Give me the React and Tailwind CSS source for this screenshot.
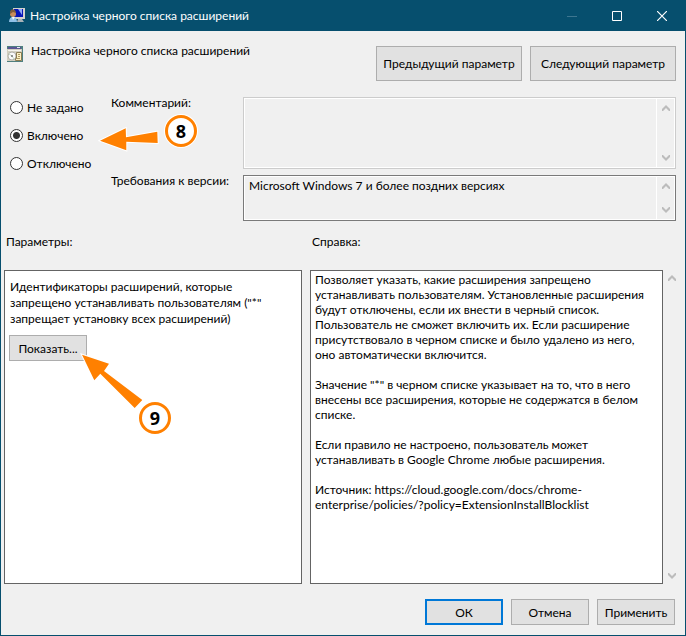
const buttonBase =
  "shrink-0 bg-[#e1e1e1] text-center whitespace-nowrap hover:bg-[#e5f1fb]";

function DialogButton({ children, className }) {
  return (
    <button type="button" className={`${buttonBase} ${className}`}>
      {children}
    </button>
  );
}

function Chevron({ direction }) {
  return (
    <svg viewBox="0 0 8 6" className="h-[6px] w-[8px]" aria-hidden="true">
      <path
        d={direction === "up" ? "M0 4 4 0 8 4V6H7L4 3 1 6H0Z" : "M0 2 4 6 8 2V0H7L4 3 1 0H0Z"}
        fill="#bcbcbc"
      />
    </svg>
  );
}

function ScrollTrack({ className }) {
  return (
    <div className={`flex w-[17px] shrink-0 flex-col items-center justify-between bg-[#f0f0f0] ${className}`}>
      <Chevron direction="up" />
      <Chevron direction="down" />
    </div>
  );
}

function PolicyIcon() {
  return (
    <svg viewBox="0 0 16 16" className="h-4 w-4 shrink-0" aria-hidden="true">
      <rect x="4" y="0" width="12" height="11" fill="#d3d2cc" />
      <rect x="5" y="1" width="9" height="8" fill="#0716b8" />
      <path d="M9 1h4v6z" fill="#8fa8f4" />
      <path d="M9 11h4l2 3H8z" fill="#a9b3b8" />
      <circle cx="4" cy="6" r="3" fill="#c98d5a" />
      <path d="M1 6c-1-6 6-6 6-1L4 4z" fill="#7d5c3c" />
      <path d="M0 14c0-7 8-7 8 0z" fill="#8fc0e6" />
      <path d="M3 9l1 3 2-3z" fill="#f4f8fc" />
    </svg>
  );
}

function SettingIcon() {
  return (
    <svg viewBox="0 0 16 16" className="h-4 w-4 shrink-0" aria-hidden="true">
      <rect width="16" height="16" fill="#4f7f80" />
      <rect x="1" y="1" width="13" height="2" fill="#5a5594" />
      <rect x="10" y="1" width="3" height="1" fill="#e8e8f4" />
      <rect x="0" y="3" width="15" height="12" fill="#d2cfc0" />
      <rect x="1" y="4" width="13" height="1" fill="#f6f5ee" />
      <circle cx="5" cy="10" r="4" fill="#fafafa" stroke="#b3b3ac" />
      <path d="M5 10 2 8M5 10l2 3" stroke="#c3dcc0" />
      <circle cx="5" cy="10" r="1" fill="#777777" />
      <path d="M9.500 6.500h5v8h-6v-2h1z" fill="#fbf0c4" stroke="#8b7c52" />
      <path d="M11 8.500h2M11 10.500h2M10 12.500h3" stroke="#b09b63" />
    </svg>
  );
}

function StateRadio({ id, label, checked }) {
  return (
    <label htmlFor={id} className="flex h-[28px] items-center gap-[4px]">
      <input
        type="radio"
        id={id}
        name="state"
        defaultChecked={checked}
        className="h-[13px] w-[13px] shrink-0 appearance-none rounded-full border border-[#333333] bg-white checked:bg-[radial-gradient(circle,#333333_0_3px,#ffffff_4px)]"
      />
      {label}
    </label>
  );
}

function StepBadge({ children, className }) {
  return (
    <span
      className={`absolute flex h-[32px] w-[32px] items-center justify-center rounded-full border-[3px] border-[#ff8000] bg-white font-['Noto_Sans',sans-serif] text-[18px] leading-none font-bold ring-1 ring-white ${className}`}
    >
      {children}
    </span>
  );
}

export default function App() {
  return (
    <div className="relative flex min-h-screen flex-col border border-t-0 border-[#064f6e] bg-[#f0f0f0] font-[Lato,'Noto_Sans',sans-serif] text-[12px] leading-[15px] text-black">
      <header className="flex h-[31px] shrink-0 items-center bg-[#064f6e] pl-[8px] text-white">
        <PolicyIcon />
        <h1 className="ml-[5px] flex-1 whitespace-nowrap">Настройка черного списка расширений</h1>
        <button type="button" aria-label="Свернуть" disabled className="flex h-full w-[45px] items-center justify-center">
          <svg viewBox="0 0 10 10" className="h-[10px] w-[10px]">
            <path d="M0 5.500h10" stroke="#3d7690" />
          </svg>
        </button>
        <button type="button" aria-label="Развернуть" className="flex h-full w-[45px] items-center justify-center">
          <svg viewBox="0 0 10 10" className="h-[10px] w-[10px]">
            <path d="M.5.5h9v9h-9z" fill="none" stroke="#ffffff" />
          </svg>
        </button>
        <button type="button" aria-label="Закрыть" className="flex h-full w-[46px] items-center justify-center">
          <svg viewBox="0 0 10 10" className="h-[10px] w-[10px]">
            <path d="M0 0 10 10M10 0 0 10" stroke="#ffffff" strokeWidth="1.2" />
          </svg>
        </button>
      </header>

      <main className="flex flex-1 flex-col">
        <section className="flex items-start pt-[15px] pr-[9px] pl-[6px]">
          <SettingIcon />
          <h2 className="-mt-[3px] ml-[8px] flex-1 whitespace-nowrap">Настройка черного списка расширений</h2>
          <div className="flex gap-[8px]">
            <DialogButton className="h-[35px] w-[146px] border border-[#adadad]">Предыдущий параметр</DialogButton>
            <DialogButton className="h-[35px] w-[146px] border border-[#adadad]">Следующий параметр</DialogButton>
          </div>
        </section>

        <form className="flex pt-[16px] pr-[9px] pl-[9px]">
          <fieldset className="-mt-[4px] w-[101px] shrink-0">
            <StateRadio id="state-unset" label="Не задано" />
            <StateRadio id="state-on" label="Включено" checked />
            <StateRadio id="state-off" label="Отключено" />
          </fieldset>
          <div className="grid flex-1 grid-cols-[132px_1fr] gap-y-[6px]">
            <label htmlFor="comment" className="-mt-[2px]">Комментарий:</label>
            <div className="flex h-[72px] gap-px border border-[#cccccc] bg-white p-px">
              <textarea id="comment" disabled className="min-w-0 flex-1 resize-none bg-[#f0f0f0] px-[4px]" />
              <ScrollTrack className="py-[6px]" />
            </div>
            <label htmlFor="supported" className="-mt-[2px]">Требования к версии:</label>
            <div className="flex h-[46px] gap-px border border-[#7a7a7a] bg-white p-px">
              <textarea
                id="supported"
                readOnly
                defaultValue="Microsoft Windows 7 и более поздних версиях"
                className="min-w-0 flex-1 resize-none overflow-hidden bg-[#f0f0f0] px-[4px] pt-px"
              />
              <ScrollTrack className="py-[6px]" />
            </div>
          </div>
        </form>

        <section className="flex flex-1 gap-[8px] pt-[13px] pr-[5px] pl-[3px]">
          <div className="flex w-[298px] shrink-0 flex-col">
            <h3 className="pl-[2px]">Параметры:</h3>
            <div className="mt-[21px] flex-1 border border-[#646464] bg-white px-[4px] pt-[8px]">
              <p className="px-px leading-[16px] whitespace-nowrap">
                Идентификаторы расширений, которые
                <br />
                запрещено устанавливать пользователям ("*"
                <br />
                запрещает установку всех расширений)
              </p>
              <DialogButton className="mt-[8px] h-[26px] w-[78px] border border-[#adadad]">Показать...</DialogButton>
            </div>
          </div>
          <div className="flex min-w-0 flex-1 flex-col">
            <h3 className="pl-[2px]">Справка:</h3>
            <div className="mt-[21px] flex flex-1">
              <div className="min-w-0 flex-1 border border-[#646464] bg-white px-[4px] pt-px whitespace-nowrap">
                <p>
                  Позволяет указать, какие расширения запрещено
                  <br />
                  устанавливать пользователям. Установленные расширения
                  <br />
                  будут отключены, если их внести в черный список.
                  <br />
                  Пользователь не сможет включить их. Если расширение
                  <br />
                  присутствовало в черном списке и было удалено из него,
                  <br />
                  оно автоматически включится.
                </p>
                <p className="mt-[15px]">
                  Значение "*" в черном списке указывает на то, что в него
                  <br />
                  внесены все расширения, которые не содержатся в белом
                  <br />
                  списке.
                </p>
                <p className="mt-[15px]">
                  Если правило не настроено, пользователь может
                  <br />
                  устанавливать в Google Chrome любые расширения.
                </p>
                <p className="mt-[15px]">
                  Источник: https://cloud.google.com/docs/chrome-
                  <br />
                  enterprise/policies/?policy=ExtensionInstallBlocklist
                </p>
              </div>
              <ScrollTrack className="py-[5px]" />
            </div>
          </div>
        </section>

        <footer className="flex justify-end gap-[8px] pt-[15px] pr-[10px] pb-[10px]">
          <DialogButton className="h-[26px] w-[78px] border-2 border-[#0078d7]">ОК</DialogButton>
          <DialogButton className="h-[26px] w-[78px] border border-[#adadad]">Отмена</DialogButton>
          <DialogButton className="h-[26px] w-[78px] border border-[#adadad]">Применить</DialogButton>
        </footer>
      </main>

      <svg viewBox="0 0 62 26" className="pointer-events-none absolute top-[127px] left-[97px] h-[26px] w-[62px]" aria-hidden="true">
        <path
          d="M2 13.7 27.7 1.3 28 10.3 59.3 4.7 59.7 16 28.3 14.7 28.3 23.3Z"
          fill="#ff8000"
          stroke="#ffffff"
          strokeWidth="2"
          paintOrder="stroke"
        />
      </svg>
      <StepBadge className="top-[115px] left-[164px]">8</StepBadge>

      <svg viewBox="0 0 66 60" className="pointer-events-none absolute top-[352px] left-[79px] h-[60px] w-[66px]" aria-hidden="true">
        <path
          d="M2 2.7 29 11.7 24 19 62.3 48 54.7 56 20.3 21.7 14.3 28.3Z"
          fill="#ff8000"
          stroke="#ffffff"
          strokeWidth="2"
          paintOrder="stroke"
        />
      </svg>
      <StepBadge className="top-[402px] left-[138px]">9</StepBadge>
    </div>
  );
}
